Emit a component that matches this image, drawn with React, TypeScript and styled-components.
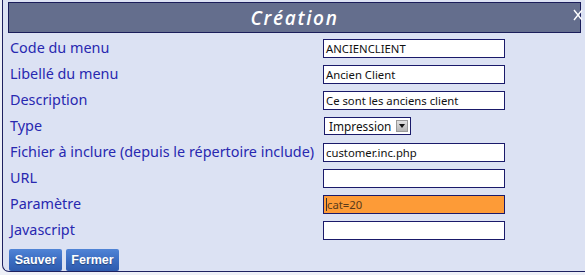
import React from 'react';
import styled, { createGlobalStyle } from 'styled-components';

const GlobalStyle = createGlobalStyle`
  html, body {
    margin: 0;
    padding: 0;
    background: #eef0f7;
    overflow: hidden;
  }
`;

const Dialog = styled.div`
  margin-left: 2px;
  width: 600px;
  height: 272px;
  box-sizing: border-box;
  background: #dce2f3;
  border-left: 1px solid #1e2160;
  border-bottom: 1px solid #1e2160;
  border-bottom-left-radius: 7px;
  padding: 2px 0 0 5px;
  position: relative;
  font-family: 'Noto Sans', 'Open Sans', sans-serif;
`;

const TitleBar = styled.div`
  width: 573px;
  height: 31px;
  box-sizing: border-box;
  background: #646e8d;
  border: 1px solid #1a1d5a;
  display: flex;
  align-items: center;
  justify-content: center;
  color: #fff;
  font-family: 'Open Sans', 'Noto Sans', sans-serif;
  font-style: italic;
  font-weight: 600;
  font-size: 19px;
  letter-spacing: 1.7px;
`;

// close cross sits over the right end of the title bar
const Close = styled.svg`
  position: absolute;
  top: 9px;
  left: 570px;
`;

const Form = styled.div`
  display: grid;
  grid-template-columns: 315px 182px;
  grid-auto-rows: 26px;
  padding-top: 6px;
`;

const Label = styled.div`
  padding-left: 2px;
  margin-top: -1px;
  color: #2828b0;
  font-size: 14.4px;
  line-height: 19px;
  white-space: nowrap;
`;

const Field = styled.div<{ $focus?: boolean }>`
  height: 19px;
  box-sizing: border-box;
  border: 1px solid #1a1a6a;
  background: ${p => (p.$focus ? '#fd9b37' : '#fff')};
  font-size: 11.3px;
  line-height: 17px;
  padding-left: 2px;
  color: ${p => (p.$focus ? '#5a3a1a' : '#111')};
  white-space: nowrap;
  overflow: hidden;
  display: flex;
  align-items: center;
`;

const Caret = styled.span`
  display: inline-block;
  width: 1px;
  height: 13px;
  background: #333;
`;

const Select = styled.div`
  margin-left: 1px;
  width: 87px;
  height: 18px;
  box-sizing: border-box;
  border: 1px solid #1a1a6a;
  background: #fff;
  display: flex;
  align-items: center;
  justify-content: space-between;
  font-size: 11.8px;
  color: #111;
  padding-left: 4px;
`;

const Arrow = styled.span`
  width: 12px;
  height: 12px;
  margin-right: 2px;
  background: linear-gradient(#e2e2e2, #b4b4b4);
  border: 1px solid #999;
  box-sizing: border-box;
  display: flex;
  align-items: center;
  justify-content: center;
`;

const Buttons = styled.div`
  display: flex;
  gap: 4px;
  margin-top: 2px;
  padding-left: 1px;
`;

const Button = styled.button`
  width: 53px;
  height: 22px;
  border: none;
  border-radius: 2px;
  background: linear-gradient(#5084d6, #3a6bc0 55%, #2f5cae);
  color: #fff;
  font-family: 'Liberation Sans', Arial, sans-serif;
  font-weight: bold;
  font-size: 12.5px;
  padding: 0;
  text-shadow: 0 1px 1px rgba(0, 0, 0, 0.35);
`;

const rows: { label: string; value?: string; kind?: 'select' | 'focus' }[] = [
  { label: 'Code du menu', value: 'ANCIENCLIENT' },
  { label: 'Libellé du menu', value: 'Ancien Client' },
  { label: 'Description', value: 'Ce sont les anciens client' },
  { label: 'Type', value: 'Impression', kind: 'select' },
  { label: 'Fichier à inclure (depuis le répertoire include)', value: 'customer.inc.php' },
  { label: 'URL', value: '' },
  { label: 'Paramètre', value: 'cat=20', kind: 'focus' },
  { label: 'Javascript', value: '' },
];

export default function App() {
  return (
    <>
      <GlobalStyle />
      <Dialog>
        <TitleBar>Création</TitleBar>
        <Close width="10" height="12" viewBox="0 0 10 12">
          <path d="M1 1l8 10M9 1L1 11" stroke="#fff" strokeWidth="1.4" fill="none" />
        </Close>
        <Form>
          {rows.map(r => (
            <React.Fragment key={r.label}>
              <Label>{r.label}</Label>
              {r.kind === 'select' ? (
                <Select>
                  {r.value}
                  <Arrow>
                    <svg width="6" height="4" viewBox="0 0 6 4">
                      <path d="M0 0h6L3 4z" fill="#111" />
                    </svg>
                  </Arrow>
                </Select>
              ) : (
                <Field $focus={r.kind === 'focus'}>
                  {r.kind === 'focus' && <Caret />}
                  {r.value}
                </Field>
              )}
            </React.Fragment>
          ))}
        </Form>
        <Buttons>
          <Button>Sauver</Button>
          <Button>Fermer</Button>
        </Buttons>
      </Dialog>
    </>
  );
}
